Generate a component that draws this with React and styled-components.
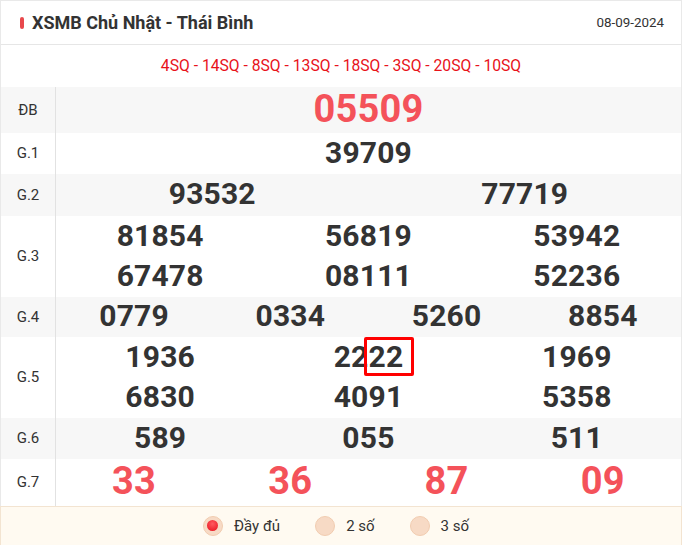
import styled, {createGlobalStyle} from "styled-components";

const GlobalStyle = createGlobalStyle`
  html, body {
    margin: 0;
    padding: 0;
    background: #fff;
    font-family: Roboto, "Liberation Sans", Arial, sans-serif;
    color: #333;
  }
`

const Box = styled.div`
  width: 682px;
  box-sizing: border-box;
  border: 1px solid #e9e9e9;
  border-bottom: none;
`

const Header = styled.div`
  display: flex;
  align-items: center;
  justify-content: space-between;
  height: 43px;
  padding: 0 17px 0 19px;
  border-bottom: 1px solid #e6e6e6;
`

const Title = styled.h2`
  display: flex;
  align-items: center;
  gap: 8px;
  margin: 0;
  font-size: 18px;
  font-weight: 700;
  color: #333;

  &::before {
    content: "";
    width: 4px;
    height: 12px;
    border-radius: 2px;
    background: #e8484c;
  }
`

const DateText = styled.span`
  font-size: 13.4px;
  color: #333;
`

const Codes = styled.div`
  height: 42px;
  line-height: 42px;
  text-align: center;
  font-size: 15.7px;
  color: #e8121a;
`

const Row = styled.div`
  display: grid;
  grid-template-columns: 55px 1fr;
  background: ${p => (p.$shade ? "#f7f7f7" : "#fff")};
`

const Label = styled.div`
  display: flex;
  align-items: center;
  justify-content: center;
  border-right: 1px solid #e2e2e2;
  font-size: 15px;
  color: #333;
`

const Numbers = styled.div`
  display: grid;
  grid-template-columns: repeat(${p => p.$cols}, 1fr);
`

const Num = styled.span`
  text-align: center;
  font-weight: 700;
  font-size: ${p => (p.$big ? 38 : 30)}px;
  line-height: ${p => (p.$lh || 40.5) - 1.5}px;
  padding-bottom: 1.5px;
  color: ${p => (p.$red ? "#f4525a" : "#333")};
  letter-spacing: 0.2px;
`

const Mark = styled.span`
  position: relative;

  &::after {
    content: "";
    position: absolute;
    left: -4px;
    right: -11px;
    top: -2px;
    bottom: -2px;
    border: 3px solid #f00;
    border-radius: 2px;
  }
`

const Footer = styled.div`
  display: flex;
  justify-content: center;
  align-items: center;
  gap: 35px;
  height: 38px;
  background: #fffaf1;
  border: 1px solid #f3e4d1;
  margin: 0 -1px;
  padding-right: 10px;
`

const Option = styled.label`
  display: flex;
  align-items: center;
  gap: 11px;
  font-size: 15px;
  color: #333;
`

const Dot = styled.span`
  width: 20px;
  height: 20px;
  border-radius: 50%;
  box-sizing: border-box;
  background: #f7dac5;
  border: 1px solid #f1ccb0;
  display: flex;
  align-items: center;
  justify-content: center;

  &::after {
    content: "";
    display: ${p => (p.$on ? "block" : "none")};
    width: 11px;
    height: 11px;
    border-radius: 50%;
    background: radial-gradient(circle at 50% 35%, #ff5a5f, #e8101c);
  }
`

const rows = [
  {label: "ĐB", cols: 1, nums: ["05509"], big: true, red: true, lh: 46},
  {label: "G.1", cols: 1, nums: ["39709"]},
  {label: "G.2", cols: 2, nums: ["93532", "77719"], lh: 42},
  {label: "G.3", cols: 3, nums: ["81854", "56819", "53942", "67478", "08111", "52236"]},
  {label: "G.4", cols: 4, nums: ["0779", "0334", "5260", "8854"], lh: 40},
  {label: "G.5", cols: 3, nums: ["1936", "2222", "1969", "6830", "4091", "5358"]},
  {label: "G.6", cols: 3, nums: ["589", "055", "511"], lh: 41},
  {label: "G.7", cols: 4, nums: ["33", "36", "87", "09"], big: true, red: true, lh: 47},
]

function App() {
  return (
    <>
      <GlobalStyle />
      <Box>
        <Header>
          <Title>XSMB Chủ Nhật - Thái Bình</Title>
          <DateText>08-09-2024</DateText>
        </Header>
        <Codes>4SQ - 14SQ - 8SQ - 13SQ - 18SQ - 3SQ - 20SQ - 10SQ</Codes>
        {rows.map((r, i) => (
          <Row key={r.label} $shade={i % 2 === 0}>
            <Label>{r.label}</Label>
            <Numbers $cols={r.cols}>
              {r.nums.map((n, j) => (
                <Num key={j} $big={r.big} $red={r.red} $lh={r.lh}>
                  {n === "2222" ? <>22<Mark>22</Mark></> : n}
                </Num>
              ))}
            </Numbers>
          </Row>
        ))}
        <Footer>
          <Option><Dot $on />Đầy đủ</Option>
          <Option><Dot />2 số</Option>
          <Option><Dot />3 số</Option>
        </Footer>
      </Box>
    </>
  )
}

export default App;
